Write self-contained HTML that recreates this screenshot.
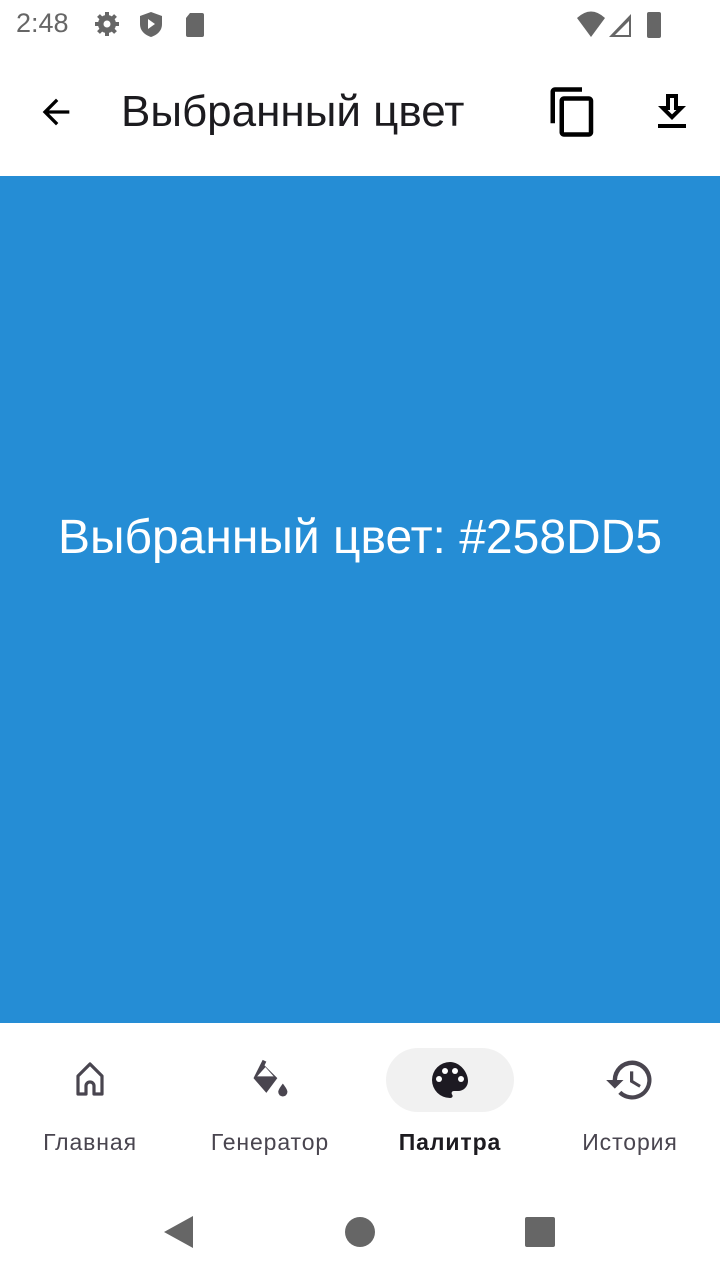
<!DOCTYPE html>
<html><head><meta charset="utf-8"><style>
body{margin:0;width:720px;height:1280px;position:relative;background:#fff;font-family:"Liberation Sans",sans-serif;overflow:hidden}
.a{position:absolute}
.lbl{position:absolute;top:1129px;font-size:23px;color:#49454f;text-align:center;width:180px;letter-spacing:0.9px}
</style></head><body>
<div class="a" style="left:16px;top:8px;font-size:27px;color:#666">2:48</div>
<svg class="a" style="left:92px;top:8px" width="120" height="32" viewBox="0 0 120 32" fill="#666">
<circle cx="15" cy="16" r="9"/><g stroke="#666" stroke-width="4"><path d="M15 4v24M3 16h24M6.5 7.5l17 17M23.5 7.5l-17 17"/></g><circle cx="15" cy="16" r="3.5" fill="#fff"/>
<path d="M59 4l11 4v8c0 7-5 11-11 13-6-2-11-6-11-13V8z"/><path d="M56 11l7 5-7 5z" fill="#fff"/>
<path d="M98 5h12a2 2 0 012 2v20a2 2 0 01-2 2H96a2 2 0 01-2-2V10z"/>
</svg>
<svg class="a" style="left:575px;top:8px" width="95" height="32" viewBox="0 0 95 32" fill="#666">
<path d="M2 10Q16-3 30 10L16 29z"/><path d="M34 29L56 6v23z"/><path d="M40 27l14-14v14z" fill="#fff"/><rect x="72" y="4" width="14" height="26" rx="2"/>
</svg>
<svg class="a" style="left:36px;top:92px" width="40" height="40" viewBox="0 0 24 24"><path d="M20 11H7.8l5.6-5.6L12 4l-8 8 8 8 1.4-1.4L7.8 13H20z"/></svg>
<div class="a" style="left:121px;top:87px;font-size:44px;color:#1c1b1f">Выбранный цвет</div>
<svg class="a" style="left:546px;top:85px" width="54" height="54" viewBox="0 0 24 24"><path d="M16 1H4c-1.1 0-2 .9-2 2v14h2V3h12V1zm3 4H8c-1.1 0-2 .9-2 2v14c0 1.1.9 2 2 2h11c1.1 0 2-.9 2-2V7c0-1.1-.9-2-2-2zm0 16H8V7h11v14z"/></svg>
<svg class="a" style="left:648px;top:88px" width="48" height="48" viewBox="0 0 24 24"><path d="M19 9h-4V3H9v6H5l7 7 7-7zm-8 2V5h2v6h1.2L12 13.2 9.8 11H11zM5 18h14v2H5z"/></svg>
<div class="a" style="left:0;top:176px;width:720px;height:847px;background:#258dd5"></div>
<div class="a" style="left:0;top:510px;width:720px;text-align:center;color:#fff;font-size:48px">Выбранный цвет: #258DD5</div>
<div class="a" style="left:386px;top:1048px;width:128px;height:64px;border-radius:32px;background:#f1f1f1"></div>
<svg class="a" style="left:66px;top:1056px" width="48" height="48" viewBox="0 0 24 24"><path d="M12 4L6 10v9h4v-4a2 2 0 014 0v4h4V10z" fill="none" stroke="#49454f" stroke-width="1.6" stroke-linejoin="round"/></svg>
<svg class="a" style="left:246px;top:1058px" width="48" height="44" viewBox="0 0 26 24" fill="#49454f"><path d="M9 1l2 1-1 2 7 7-6 8-7-8z"/><path d="M6 10h9l-4.5-5z" fill="#fff"/><path d="M20 14c0 0-2.5 3-2.5 4.5a2.5 2.5 0 005 0C22.5 17 20 14 20 14z"/></svg>
<svg class="a" style="left:426px;top:1056px" width="48" height="48" viewBox="0 0 24 24"><path fill="#1d1a22" d="M12 3a9 9 0 000 18c1.4 0 1.5-1 1.1-1.6-.5-.7-.4-1.9.9-1.9H16a5 5 0 005-5c0-4.4-4-9.5-9-9.5z"/><circle cx="6.5" cy="11.5" r="1.5" fill="#fff"/><circle cx="9.5" cy="7.5" r="1.5" fill="#fff"/><circle cx="14.5" cy="7.5" r="1.5" fill="#fff"/><circle cx="17.5" cy="11.5" r="1.5" fill="#fff"/></svg>
<svg class="a" style="left:604px;top:1054px" width="52" height="52" viewBox="0 0 24 24"><path fill="#49454f" d="M13 3a9 9 0 00-9 9H1l4 4 4-4H6a7 7 0 112 5l-1.4 1.4A9 9 0 1013 3zm-1 5v5l4.3 2.5.7-1.2-3.5-2.1V8z"/></svg>
<div class="lbl" style="left:0">Главная</div>
<div class="lbl" style="left:180px">Генератор</div>
<div class="lbl" style="left:360px;font-weight:bold;color:#1d1b20">Палитра</div>
<div class="lbl" style="left:540px">История</div>
<svg class="a" style="left:160px;top:1210px" width="420" height="44" viewBox="0 0 420 44" fill="#666"><path d="M4 22L33 6v32z"/><circle cx="200" cy="22" r="15"/><rect x="365" y="7" width="30" height="30" rx="2"/></svg>
</body></html>
